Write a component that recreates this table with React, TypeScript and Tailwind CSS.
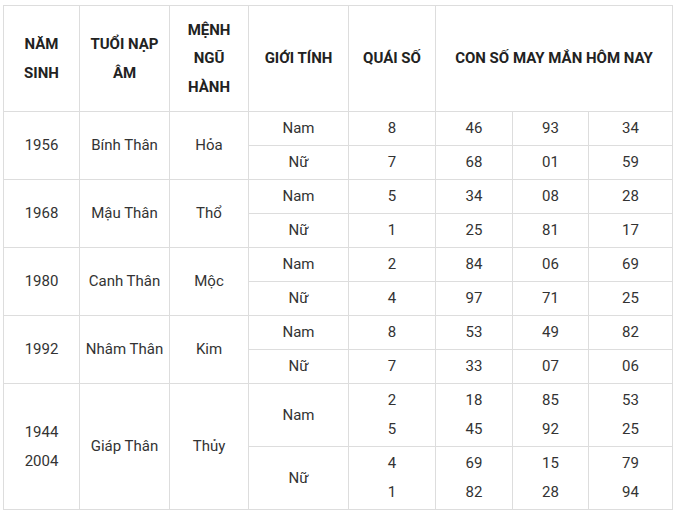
import React from 'react';

interface Group {
  year: string[];
  napAm: string;
  menh: string;
  nam: { q: string[]; nums: string[][] };
  nu: { q: string[]; nums: string[][] };
  tall?: boolean;
}

const groups: Group[] = [
  {
    year: ['1956'],
    napAm: 'Bính Thân',
    menh: 'Hỏa',
    nam: { q: ['8'], nums: [['46', '93', '34']] },
    nu: { q: ['7'], nums: [['68', '01', '59']] },
  },
  {
    year: ['1968'],
    napAm: 'Mậu Thân',
    menh: 'Thổ',
    nam: { q: ['5'], nums: [['34', '08', '28']] },
    nu: { q: ['1'], nums: [['25', '81', '17']] },
  },
  {
    year: ['1980'],
    napAm: 'Canh Thân',
    menh: 'Mộc',
    nam: { q: ['2'], nums: [['84', '06', '69']] },
    nu: { q: ['4'], nums: [['97', '71', '25']] },
  },
  {
    year: ['1992'],
    napAm: 'Nhâm Thân',
    menh: 'Kim',
    nam: { q: ['8'], nums: [['53', '49', '82']] },
    nu: { q: ['7'], nums: [['33', '07', '06']] },
  },
  {
    year: ['1944', '2004'],
    napAm: 'Giáp Thân',
    menh: 'Thủy',
    nam: { q: ['2', '5'], nums: [['18', '85', '53'], ['45', '92', '25']] },
    nu: { q: ['4', '1'], nums: [['69', '15', '79'], ['82', '28', '94']] },
    tall: true,
  },
];

const cell = 'border border-[#dddddd] text-center align-middle p-0';

const Lines = ({ items }: { items: string[] }) => (
  <>
    {items.map((t, i) => (
      <div key={i}>{t}</div>
    ))}
  </>
);

export default function App() {
  return (
    <div className="bg-white w-[674px] h-[514px] pt-[5px] pl-[3px]" style={{ fontFamily: 'Roboto, "Liberation Sans", sans-serif' }}>
      <table className="border-collapse table-fixed w-[669px] text-[15px] leading-[29px] text-[#333333]">
        <colgroup>
          <col className="w-[76px]" />
          <col className="w-[90px]" />
          <col className="w-[79px]" />
          <col className="w-[100px]" />
          <col className="w-[87px]" />
          <col className="w-[77px]" />
          <col className="w-[76px]" />
          <col className="w-[84px]" />
        </colgroup>
        <thead>
          <tr className="h-[106px] font-bold text-[#222222] leading-[28.5px]">
            <th className={cell}>NĂM<br />SINH</th>
            <th className={cell}>TUỔI NẠP<br />ÂM</th>
            <th className={cell}>MỆNH<br />NGŨ<br />HÀNH</th>
            <th className={cell}>GIỚI TÍNH</th>
            <th className={cell}>QUÁI SỐ</th>
            <th className={cell} colSpan={3}>CON SỐ MAY MẮN HÔM NAY</th>
          </tr>
        </thead>
        <tbody>
          {groups.map((g) => {
            const h = g.tall ? 'h-[63px]' : 'h-[34px]';
            return (
              <React.Fragment key={g.year.join()}>
                <tr className={h}>
                  <td className={cell} rowSpan={2}><Lines items={g.year} /></td>
                  <td className={cell} rowSpan={2}>{g.napAm}</td>
                  <td className={cell} rowSpan={2}>{g.menh}</td>
                  <td className={cell}>Nam</td>
                  <td className={cell}><Lines items={g.nam.q} /></td>
                  {[0, 1, 2].map((c) => (
                    <td key={c} className={cell}><Lines items={g.nam.nums.map((r) => r[c])} /></td>
                  ))}
                </tr>
                <tr className={h}>
                  <td className={cell}>Nữ</td>
                  <td className={cell}><Lines items={g.nu.q} /></td>
                  {[0, 1, 2].map((c) => (
                    <td key={c} className={cell}><Lines items={g.nu.nums.map((r) => r[c])} /></td>
                  ))}
                </tr>
              </React.Fragment>
            );
          })}
        </tbody>
      </table>
    </div>
  );
}
